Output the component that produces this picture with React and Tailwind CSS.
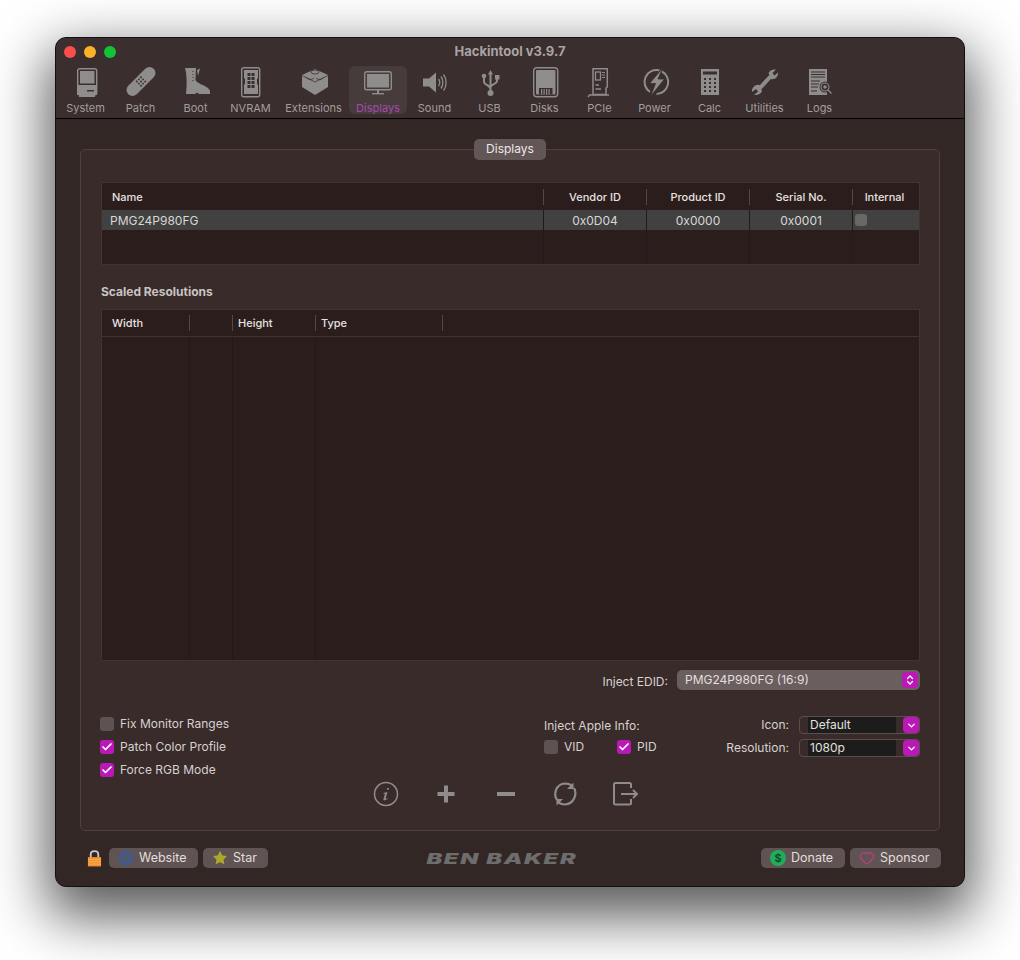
import React from 'react';
import { Check, ChevronDown, ChevronsUpDown, Globe, Heart, Star } from 'lucide-react';

const G = '#8f8c8c';
const D = '#3a2e2e';

const toolIcons = {
    system: (
        <>
            <rect x="11.7" y="1.7" width="19" height="26" rx="2" fill="none" stroke={G} strokeWidth="1.4" />
            <rect x="14" y="4" width="14.500" height="12.500" fill={G} />
            <path d="M11 18H31V28H11Z" fill={G} />
            <rect x="21" y="23" width="7" height="1.5" fill={D} />
            <rect x="13" y="28" width="16" height="2" fill={G} />
        </>
    ),
    patch: (
        <g transform="rotate(-45 20 14.5)">
            <rect x="2" y="8.5" width="36" height="12" rx="6" fill={G} />
            {[[17, 11.5], [20, 11.5], [23, 11.5], [17, 14.5], [20, 14.5], [23, 14.5], [17, 17.5], [20, 17.5], [23, 17.5]].map(([x, y]) => (
                <circle key={`${x}-${y}`} cx={x} cy={y} r="0.9" fill={D} />
            ))}
        </g>
    ),
    boot: (
        <>
            <path d="M9 1H20L19.5 13C22 18 33 18.5 34 24V27H23L21 25.5L19 27H10C11 18 11 8 9 1Z" fill={G} />
            <path d="M21 3L24 1.5L22 9Z" fill={G} />
            <path d="M17 4V16" stroke={D} strokeWidth="1" strokeDasharray="1 2" />
        </>
    ),
    nvram: (
        <>
            <rect x="10.7" y="0.7" width="18" height="29" rx="2" fill="none" stroke={G} strokeWidth="1.4" />
            <path d="M13 3H27V11L26 12V17L27 18V27H13V18L14 17V12L13 11Z" fill={G} />
            {[6, 10, 14, 18].map((y) => (
                <g key={y}>
                    <rect x="16.5" y={y} width="3" height="3" fill={D} />
                    <rect x="20.5" y={y} width="3" height="3" fill={D} />
                </g>
            ))}
        </>
    ),
    brick: (
        <>
            <path d="M8 8L21 2L34 8V20L21 28L8 20Z" fill={G} />
            <path d="M8 8.500L21 15L34 8.500" fill="none" stroke={D} strokeWidth="0.7" />
            <ellipse cx="21" cy="5" rx="4" ry="2" fill="none" stroke={D} strokeWidth="0.8" />
            <path d="M12 10C14 13 18 13 20 11M22 11C24 13 28 13 30 10" fill="none" stroke={D} strokeWidth="0.8" />
        </>
    ),
    monitor: (
        <>
            <rect x="6.7" y="4.7" width="26.6" height="18" rx="2" fill="none" stroke={G} strokeWidth="1.4" />
            <rect x="9" y="7" width="22" height="13.5" fill={G} />
            <rect x="19" y="23" width="2" height="3.5" fill={G} />
            <rect x="14" y="26" width="12" height="1.4" fill={G} />
        </>
    ),
    sound: (
        <>
            <path d="M8 11.500H14L21 5.500V25.500L14 19.500H8Z" fill={G} />
            <path d="M23.5 12C25 14 25 17 23.5 19M26 9.500C28.500 13 28.500 18 26 21.500M28.500 7.500C32 12 32 19 28.500 23.500" fill="none" stroke={G} strokeWidth="1.3" />
        </>
    ),
    usb: (
        <>
            <path d="M20.5 3L23 7.5H18Z" fill={G} />
            <path d="M20.500 6V25M14 10V15C14 18 20 18 20.500 22M27 11V14C27 17 21 17 20.500 20" fill="none" stroke={G} strokeWidth="2" />
            <circle cx="14" cy="9" r="2.300" fill={G} />
            <rect x="25" y="8" width="4.500" height="4.500" fill={G} />
            <circle cx="20.5" cy="26" r="3" fill={G} />
        </>
    ),
    disks: (
        <>
            <rect x="8.7" y="0.7" width="24" height="29" rx="3" fill="none" stroke={G} strokeWidth="1.4" />
            <rect x="11" y="3" width="19.5" height="24.5" rx="1" fill={G} />
            <rect x="14" y="21" width="13.5" height="6.5" fill={D} />
            {[16, 18.5, 21, 23.5].map((x) => (
                <rect key={x} x={x} y="22" width="1.2" height="5.5" fill={G} />
            ))}
        </>
    ),
    pcie: (
        <>
            <path d="M13 1.700H27.300V20L26 21V27.500H13Z" fill="none" stroke={G} strokeWidth="1.5" />
            <path d="M8 30L9.500 28H29" fill="none" stroke={G} strokeWidth="1.300" />
            <rect x="15.500" y="5" width="5" height="8" fill="none" stroke={G} strokeWidth="1.300" />
            <path d="M22 5.500H25M22 8H25M22 10.500H25" stroke={G} strokeWidth="1.100" />
            <path d="M15.500 18H19M15.500 22H21" stroke={G} strokeWidth="1.400" />
        </>
    ),
    power: (
        <>
            <path d="M15 25A12 12 0 0 1 24.500 3.300M27 4.500A12 12 0 0 1 21.500 27" fill="none" stroke={G} strokeWidth="2" />
            <path d="M28 0.500L14.500 16.500H20.500L15.500 29.500L29.500 12H23Z" fill={G} stroke={D} strokeWidth="0.800" />
        </>
    ),
    calc: (
        <>
            <rect x="11" y="2" width="18" height="26" fill={G} />
            <rect x="13" y="4.5" width="14" height="3" fill={D} />
            {[11, 15, 19, 23].map((y) => [15, 20, 25].map((x) => (
                <rect key={`${x}-${y}`} x={x - 1} y={y} width="2" height="2" fill={D} />
            )))}
        </>
    ),
    wrench: (
        <>
            <path d="M14 22L26 9" stroke={G} strokeWidth="4" />
            <path d="M23.5 6C25 3 28 2 31 2.500L27.500 6L29.500 8.500L33 5.500C33.500 9.500 30 13 26 12ZM17 24C16 27 13 28.500 9 28L13 24.500L11 22L7 25C6.500 21 10 17 14.500 18Z" fill={G} />
        </>
    ),
    logs: (
        <>
            <rect x="9" y="2" width="18" height="26" fill={G} />
            <path d="M11 5H25M11 7.5H25M11 10H25M11 14H20M11 17H19M11 20H18M11 24H17" stroke={D} strokeWidth="1" />
            <circle cx="25" cy="20" r="5.5" fill={D} />
            <circle cx="25" cy="20" r="4" fill="none" stroke={G} strokeWidth="1.1" />
            <circle cx="25" cy="20" r="1.8" fill={G} />
            <path d="M28 23L31.5 26.5" stroke={G} strokeWidth="1.3" />
        </>
    ),
};

const toolItems = [
    { title: 'System', icon: 'system', w: 'w-[55px]' },
    { title: 'Patch', icon: 'patch', w: 'w-[55px]' },
    { title: 'Boot', icon: 'boot', w: 'w-[55px]' },
    { title: 'NVRAM', icon: 'nvram', w: 'w-[55px]' },
    { title: 'Extensions', icon: 'brick', w: 'w-[71px]' },
    { title: 'Displays', icon: 'monitor', w: 'w-[58px]', active: true },
    { title: 'Sound', icon: 'sound', w: 'w-[55px]' },
    { title: 'USB', icon: 'usb', w: 'w-[55px]' },
    { title: 'Disks', icon: 'disks', w: 'w-[55px]' },
    { title: 'PCIe', icon: 'pcie', w: 'w-[55px]' },
    { title: 'Power', icon: 'power', w: 'w-[55px]' },
    { title: 'Calc', icon: 'calc', w: 'w-[55px]' },
    { title: 'Utilities', icon: 'wrench', w: 'w-[55px]' },
    { title: 'Logs', icon: 'logs', w: 'w-[55px]' },
];

const ToolItem = ({ item }) => (
    <div className={`flex flex-col items-center h-[48px] pt-px rounded-md shrink-0 ${item.w} ${item.active ? 'bg-[#473c3c]' : ''}`}>
        <svg width="40" height="32" viewBox="0 0 40 32" className="shrink-0">{toolIcons[item.icon]}</svg>
        <span className={`shrink-0 text-[11px] leading-[14px] mt-[2px] ${item.active ? 'text-[#a848ac]' : 'text-[#a39e9c]'}`}>{item.title}</span>
    </div>
);

const CheckBox = ({ on, small }) => (
    <span className={`flex items-center justify-center shrink-0 rounded-[3px] ${small ? 'w-3 h-3 bg-[#6b6767]' : 'w-[14px] h-[14px]'} ${on ? 'bg-[#bb18b8]' : small ? '' : 'bg-[#5d5353]'}`}>
        {on && <Check size={12} strokeWidth={3.5} className="text-white" />}
    </span>
);

const CheckRow = ({ on, label }) => (
    <div className="flex items-center gap-[6px] h-[14px] text-[12px] text-[#d6d1d0]">
        <CheckBox on={on} />
        <span>{label}</span>
    </div>
);

const HeadCell = ({ w, label, center }) => (
    <div className={`flex items-center h-full shrink-0 ${w}`}>
        <div className="w-px h-4 bg-[#544746]" />
        <span className={`flex-1 text-[11px] font-medium text-[#e6e2e1] ${center ? 'text-center' : 'pl-[5px]'}`}>{label}</span>
    </div>
);

const Combo = ({ label, value }) => (
    <div className="flex items-center gap-[10px] h-[18px]">
        <span className="text-[12px] text-[#d6d1d0]">{label}</span>
        <div className="flex items-center w-[121px] h-[18px] rounded-[4px] border border-[#5a4e4d] pl-2">
            <span className="flex items-center w-[88px] h-[16px] pl-[2px] bg-[#1d1c1c] text-[12px] text-[#e3e0df]">{value}</span>
            <span className="flex items-center justify-center w-4 h-4 ml-[7px] rounded-[4px] bg-[#bb18b8]">
                <ChevronDown size={11} strokeWidth={3} className="text-white" />
            </span>
        </div>
    </div>
);

const FootButton = ({ w, icon, label }) => (
    <div className={`flex items-center gap-[5px] h-5 pl-[9px] rounded-[5px] bg-[#5f5453] text-[12.5px] text-[#e2dedd] ${w}`}>
        {icon}
        <span>{label}</span>
    </div>
);

const App = () => {
    const displayCols = ['w-[103px]', 'w-[103px]', 'w-[103px]'];

    return (
        <div className="w-[1020px] h-[960px] bg-white pl-[55px] pt-[37px] overflow-hidden font-['Inter',sans-serif]">
            <div className="flex flex-col w-[910px] h-[850px] rounded-[11px] border border-[#111] bg-[#332726] overflow-hidden shadow-[0_22px_55px_8px_rgba(0,0,0,0.65)]">
                {/* Title + toolbar */}
                <div className="h-[81px] shrink-0 bg-[#3a2e2e] border-b border-black">
                    <div className="flex items-center justify-between h-[28px] px-2">
                        <div className="flex gap-2 w-[100px]">
                            <span className="w-3 h-3 rounded-full bg-[#fb4d4b]" />
                            <span className="w-3 h-3 rounded-full bg-[#fdb12a]" />
                            <span className="w-3 h-3 rounded-full bg-[#12c433]" />
                        </div>
                        <span className="text-[13px] font-bold text-[#a9a4a3]">Hackintool v3.9.7</span>
                        <div className="w-[100px]" />
                    </div>
                    <div className="flex pl-[2px]">
                        {toolItems.map((item) => (
                            <ToolItem key={item.title} item={item} />
                        ))}
                    </div>
                </div>

                {/* Main */}
                <div className="flex-1 px-[24px] pt-[30px]">
                    <div className="relative w-[860px] h-[682px] rounded-[5px] border border-[#4d4140] bg-[#382b2a] pl-[20px] pr-[19px] pt-[32px]">
                        <div className="absolute -top-[11px] left-1/2 -translate-x-1/2 flex items-center justify-center w-[72px] h-[21px] pb-px rounded-[5px] bg-[#625756] text-[12px] text-[#ece8e7]">
                            Displays
                        </div>

                        {/* Displays table */}
                        <div className="h-[83px] border border-[#3f3433] bg-[#2b1d1b]">
                            <div className="flex items-center h-[27px] pt-px">
                                <span className="w-[441px] shrink-0 pl-[10px] text-[11px] font-medium text-[#e6e2e1]">Name</span>
                                <HeadCell w="w-[103px]" label="Vendor ID" center />
                                <HeadCell w="w-[103px]" label="Product ID" center />
                                <HeadCell w="w-[103px]" label="Serial No." center />
                                <HeadCell w="flex-1 pr-[3px]" label="Internal" center />
                            </div>
                            <div className="flex h-[20px] bg-[#414141] text-[12px] text-[#d9d6d5]">
                                <span className="flex items-center w-[441px] shrink-0 pl-2 pt-px">PMG24P980FG</span>
                                <span className="flex items-center justify-center w-[103px] pt-px border-l border-[#1c1c1c]">0x0D04</span>
                                <span className="flex items-center justify-center w-[103px] pt-px border-l border-[#1c1c1c]">0x0000</span>
                                <span className="flex items-center justify-center w-[103px] pt-px border-l border-[#1c1c1c]">0x0001</span>
                                <span className="flex flex-1 items-start pt-[4px] pl-[2px] border-l border-[#1c1c1c]">
                                    <CheckBox small />
                                </span>
                            </div>
                            <div className="flex h-[34px]">
                                <div className="w-[441px] shrink-0" />
                                {displayCols.map((w, i) => (
                                    <div key={i} className={`${w} border-l border-[#1c1c1c]`} />
                                ))}
                                <div className="flex-1 border-l border-[#1c1c1c]" />
                            </div>
                        </div>

                        <div className="flex items-center h-[44px] pt-[10px] text-[12px] font-bold text-[#c9c4c3]">Scaled Resolutions</div>

                        {/* Scaled resolutions table */}
                        <div className="flex flex-col h-[352px] border border-[#3f3433] bg-[#2b1d1b]">
                            <div className="flex items-center h-[27px] shrink-0 border-b border-[#3f3433]">
                                <span className="w-[87px] shrink-0 pl-[10px] text-[11px] font-medium text-[#e6e2e1]">Width</span>
                                <HeadCell w="w-[43px]" label="" />
                                <HeadCell w="w-[83px]" label="Height" />
                                <HeadCell w="w-[127px]" label="Type" />
                                <HeadCell w="flex-1" label="" />
                            </div>
                            <div className="flex flex-1">
                                <div className="w-[87px] shrink-0" />
                                <div className="w-[43px] border-l border-[#231817]" />
                                <div className="w-[83px] border-l border-[#231817]" />
                                <div className="border-l border-[#231817]" />
                            </div>
                        </div>

                        {/* Inject EDID */}
                        <div className="flex items-center justify-end gap-[9px] h-[20px] mt-[9px]">
                            <span className="pt-[3px] text-[12px] text-[#d6d1d0]">Inject EDID:</span>
                            <div className="flex items-center justify-between w-[243px] h-[20px] rounded-[5px] bg-[#6a5f5e] pl-2 pr-[2px] text-[12px] text-[#e3dfde]">
                                <span>PMG24P980FG (16:9)</span>
                                <span className="flex items-center justify-center w-[16px] h-[16px] rounded-[4px] bg-[#bb18b8]">
                                    <ChevronsUpDown size={12} strokeWidth={2.5} className="text-white" />
                                </span>
                            </div>
                        </div>

                        {/* Options */}
                        <div className="flex h-[65px] mt-[25px]">
                            <div className="flex flex-col gap-[9px] w-[443px] shrink-0 pt-[2px] -ml-px">
                                <CheckRow label="Fix Monitor Ranges" />
                                <CheckRow on label="Patch Color Profile" />
                                <CheckRow on label="Force RGB Mode" />
                            </div>
                            <div className="flex flex-col w-[150px] shrink-0 pl-px pt-[3px]">
                                <span className="text-[12px] leading-[15px] text-[#d6d1d0]">Inject Apple Info:</span>
                                <div className="flex mt-[7px]">
                                    <div className="w-[73px]"><CheckRow label="VID" /></div>
                                    <CheckRow on label="PID" />
                                </div>
                            </div>
                            <div className="flex flex-col flex-1 items-end gap-[5px] pt-px">
                                <Combo label="Icon:" value="Default" />
                                <Combo label="Resolution:" value="1080p" />
                            </div>
                        </div>

                        {/* Actions */}
                        <div className="flex gap-8 pl-[271px] h-[28px] text-[#8f8c8c]">
                            <svg width="28" height="28" viewBox="0 0 28 28">
                                <circle cx="14" cy="14" r="11.5" fill="none" stroke="currentColor" strokeWidth="1.5" />
                                <path d="M15 8H16.8V9.8H15ZM11.5 13L15.5 12L13.6 18.5C13.5 19 14 19.2 15.5 18L15.8 18.7C14 20.3 11 21 11.4 19L13 13.8L11.7 13.9Z" fill="currentColor" />
                            </svg>
                            <svg width="28" height="28" viewBox="0 0 28 28">
                                <path d="M14 5.5V22.5M5.5 14H22.5" stroke="currentColor" strokeWidth="4" />
                            </svg>
                            <svg width="28" height="28" viewBox="0 0 28 28">
                                <path d="M5 14H23" stroke="currentColor" strokeWidth="4" />
                            </svg>
                            <svg width="28" height="28" viewBox="1 0 28 28">
                                <path d="M6 20C2 14 5 4 14 3.500C17 3.500 20 4.500 21.500 6.500M23 8C26.500 14 23 24 14 24.500C11 24.500 8.500 23.500 6.500 21.500" fill="none" stroke="currentColor" strokeWidth="2.200" />
                                <path d="M22.500 2.500V9H16ZM5.500 25.500V19H12Z" fill="currentColor" />
                            </svg>
                            <svg width="28" height="28" viewBox="1 0 28 28">
                                <path d="M20 8V4.500C20 3.500 19.500 3 18.500 3H4.500C3.500 3 3 3.500 3 4.500V23C3 24 3.500 24.500 4.500 24.500H18.500C19.500 24.500 20 24 20 23V19" fill="none" stroke="currentColor" strokeWidth="2" />
                                <path d="M10 14H26M22 10L26 14L22 18" fill="none" stroke="currentColor" strokeWidth="2" />
                            </svg>
                        </div>
                    </div>

                    {/* Footer */}
                    <div className="flex items-center justify-between h-5 mt-[17px] pl-[7px]">
                        <div className="flex items-center gap-[5px]">
                            <svg width="15" height="20" viewBox="0 0 16 20" className="mr-[2px]">
                                <path d="M4 10V6C4 1.500 12 1.500 12 6V10" fill="none" stroke="#c9c5c0" strokeWidth="2" />
                                <rect x="1" y="9" width="14" height="10" fill="#f0902c" />
                                <path d="M1 11.500H15M1 14H15M1 16.500H15" stroke="#fbb45c" strokeWidth="0.9" />
                            </svg>
                            <FootButton w="w-[89px]" label="Website" icon={<Globe size={16} strokeWidth={1.6} className="text-[#2f5eb3]" />} />
                            <FootButton w="w-[65px]" label="Star" icon={<Star size={16} fill="#aca82c" strokeWidth={0} />} />
                        </div>
                        <span className="inline-block mr-[25px] scale-x-[1.68] text-[14px] font-black italic tracking-[1px] text-[#6e6d6d]">BEN BAKER</span>
                        <div className="flex items-center gap-[5px] -mr-px">
                            <FootButton w="w-[84px]" label="Donate" icon={
                                <span className="flex items-center justify-center w-4 h-4 rounded-full bg-[#1fae57] text-[11px] font-bold text-[#17482c]">$</span>
                            } />
                            <FootButton w="w-[91px]" label="Sponsor" icon={<Heart size={16} strokeWidth={1.6} className="text-[#c83a80]" />} />
                        </div>
                    </div>
                </div>
            </div>
        </div>
    );
};

export default App;
